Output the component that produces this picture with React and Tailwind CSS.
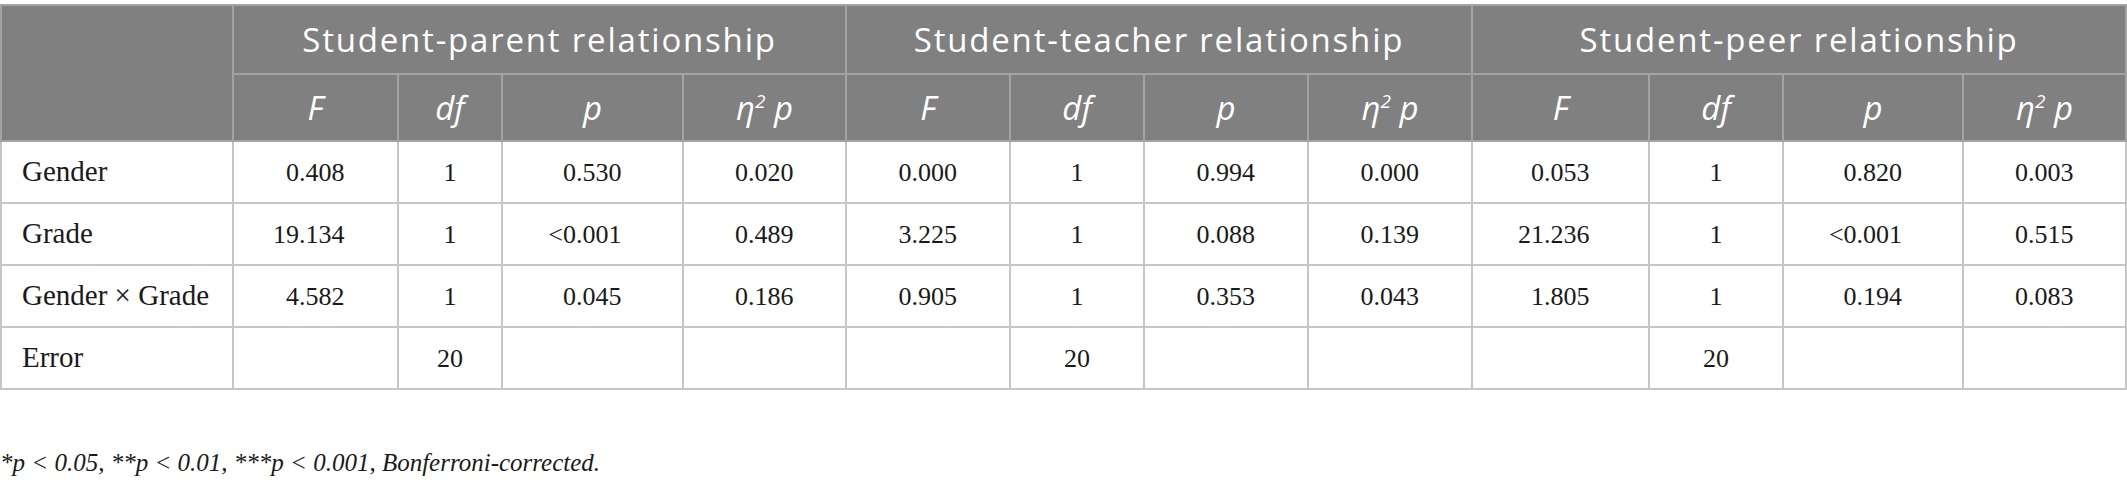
const groups = ['Student-parent relationship', 'Student-teacher relationship', 'Student-peer relationship'];

const widths = [232, 165, 104, 181, 163, 164, 134, 164, 164, 177, 134, 180, 163];

const rows = [
  ['Gender', ['0.408', '1', '0.530', '0.020'], ['0.000', '1', '0.994', '0.000'], ['0.053', '1', '0.820', '0.003']],
  ['Grade', ['19.134', '1', '<0.001', '0.489'], ['3.225', '1', '0.088', '0.139'], ['21.236', '1', '<0.001', '0.515']],
  ['Gender × Grade', ['4.582', '1', '0.045', '0.186'], ['0.905', '1', '0.353', '0.043'], ['1.805', '1', '0.194', '0.083']],
  ['Error', ['', '20', '', ''], ['', '20', '', ''], ['', '20', '', '']],
];

const sans = { fontFamily: '"Open Sans", "Noto Sans", sans-serif' };
const serif = { fontFamily: '"Liberation Serif", "Times New Roman", serif' };

function SubHeads() {
  return (
    <>
      <th className="border-2 border-[#a3a3a3] font-normal italic">F</th>
      <th className="border-2 border-[#a3a3a3] font-normal italic">df</th>
      <th className="border-2 border-[#a3a3a3] font-normal italic">p</th>
      <th className="border-2 border-[#a3a3a3] font-normal italic">
        η<sup className="text-[19px] -top-[12px]">2</sup> p
      </th>
    </>
  );
}

// value right-aligned in a box as wide as "0.000", so longer values grow to the left
function Num({ v }) {
  return (
    <div className="flex justify-center">
      <div className="w-[58px] flex justify-end whitespace-nowrap">{v}</div>
    </div>
  );
}

export default function App() {
  return (
    <div className="bg-white w-[2127px] h-[491px] pt-[4px]">
      <table className="table-fixed border-collapse w-[2127px] border-2 border-[#cfcfcf]">
        <colgroup>
          {widths.map((w, i) => (
            <col key={i} style={{ width: w }} />
          ))}
        </colgroup>
        <thead style={sans} className="bg-[#7f807f] text-white">
          <tr className="h-[69px]">
            <th rowSpan={2} className="border-2 border-[#a3a3a3]" />
            {groups.map((g) => (
              <th key={g} colSpan={4} className="border-2 border-[#a3a3a3] font-normal text-[33px] tracking-[1.8px]">
                {g}
              </th>
            ))}
          </tr>
          <tr className="h-[67px] text-[33px]">
            <SubHeads />
            <SubHeads />
            <SubHeads />
          </tr>
        </thead>
        <tbody style={serif} className="text-[#1a1a1a] text-[26px]">
          {rows.map(([label, ...vals]) => (
            <tr key={label} className="h-[62px]">
              <td className="border-2 border-[#c6c6c6] pl-[20px] text-left text-[29px]">{label}</td>
              {vals.map((g, gi) =>
                g.map((v, i) => (
                  <td key={gi + '-' + i} className="border-2 border-[#c6c6c6] text-center">
                    {i === 1 ? v : <Num v={v} />}
                  </td>
                ))
              )}
            </tr>
          ))}
        </tbody>
      </table>
      <p style={serif} className="mt-[60px] text-[25px] italic text-[#1a1a1a] leading-none">
        *p {'<'} 0.05, **p {'<'} 0.01, ***p {'<'} 0.001, Bonferroni-corrected.
      </p>
    </div>
  );
}
